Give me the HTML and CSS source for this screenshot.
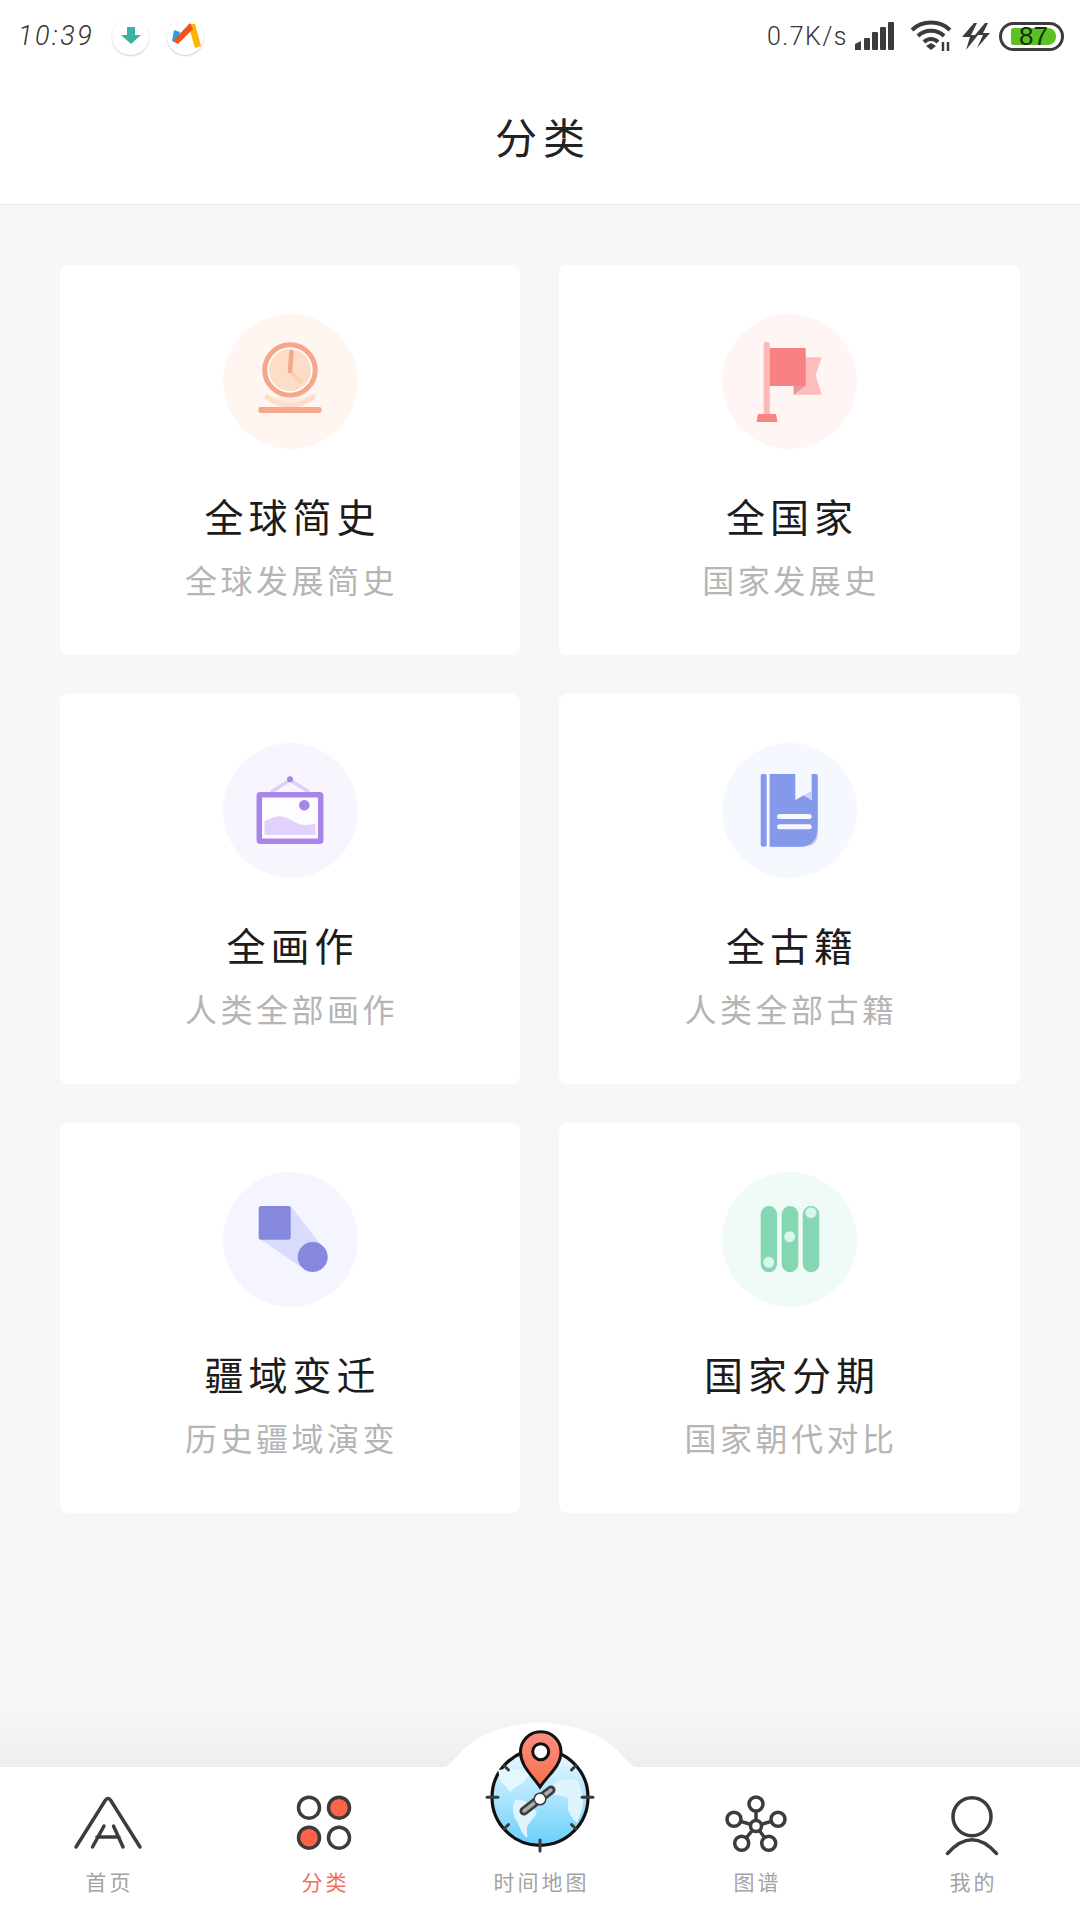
FILE: index.html
```html
<!DOCTYPE html>
<html lang="zh-CN">
<head>
  <meta charset="UTF-8" />
  <meta name="viewport" content="width=device-width, initial-scale=1" />
  <title>分类</title>
  <link rel="stylesheet" href="styles.css">
</head>
<body>

<header class="top">
  <div class="status">
    <div class="status-left">
      <span class="time">10:39</span>
      <span class="note">
        <svg width="24" height="24" viewBox="0 0 24 24"><path d="M8 3h8v8h6l-10 9L2 11h6z" fill="#3cb2a0"/></svg>
      </span>
      <span class="note">
        <svg width="30" height="30" viewBox="0 0 30 30">
          <path d="M3 9l6 2-3 11-5-2z" fill="#2a9fe8"/>
          <path d="M17 3h7l6 22-6 2z" fill="#ffb400"/>
          <path d="M19 2l3 6-15 15-5-3z" fill="#f4511e"/>
        </svg>
      </span>
    </div>
    <div class="status-right">
      <span class="speed">0.7K/s</span>
      <svg width="40" height="30" viewBox="0 0 40 30" fill="#3c3c3c">
        <path d="M0 23l6-3v9H0z"/><rect x="9" y="17" width="6" height="12" rx="1"/><rect x="17" y="11" width="6" height="18" rx="1"/><rect x="25" y="6" width="6" height="23" rx="1"/><rect x="33" y="1" width="6" height="28" rx="1"/>
      </svg>
      <svg class="wifi" width="44" height="32" viewBox="0 0 44 32" fill="none" stroke="#3c3c3c" stroke-width="4">
        <path d="M2 10C12 0 30 0 40 10"/><path d="M8 16C15 9 27 9 34 16"/><path d="M14 22c4-4 10-4 14 0"/>
        <path d="M16 26l5-3 5 3-5 4z" fill="#3c3c3c" stroke="none"/>
        <path d="M33 22v9M38 22v9" stroke-width="2.5"/>
      </svg>
      <svg width="30" height="30" viewBox="0 0 30 30" fill="#3c3c3c">
        <path d="M13 2L1 16h8L5 29l12-15h-7l6-12z"/><path d="M24 2L14 14h8l-6 13 13-15h-7l5-10z"/>
      </svg>
      <div class="battery"><span class="battery-fill">87</span></div>
    </div>
  </div>
  <h1 class="page-title">分类</h1>
</header>

<main class="grid">

  <a class="card">
    <svg class="card-icon" viewBox="0 0 135 135">
      <circle cx="67.5" cy="67.5" r="67.5" fill="#fff6f1"/>
      <circle cx="67" cy="56" r="25.2" fill="#fff" stroke="#f6a78a" stroke-width="5"/>
      <circle cx="67" cy="56" r="21" fill="#fddcc8"/>
      <path d="M67 57l10.500 10.500" stroke="#fcd0b3" stroke-width="4" stroke-linecap="round" fill="none"/>
      <path d="M68.500 38L67 57" stroke="#f6a78a" stroke-width="4.500" stroke-linecap="round" fill="none"/>
      <path d="M44 83Q67 100 90 83" stroke="#fddcc8" stroke-width="5" stroke-linecap="round" fill="#fddcc8" fill-opacity=".45"/>
      <rect x="35.500" y="93" width="63" height="6" rx="2" fill="#f7a88b"/>
    </svg>
    <h2 class="card-title">全球简史</h2>
    <p class="card-sub">全球发展简史</p>
  </a>

  <a class="card">
    <svg class="card-icon" viewBox="0 0 135 135">
      <circle cx="67.5" cy="67.5" r="67.5" fill="#fff5f5"/>
      <path d="M83.700 43.300h16l-6 18 6 19.400h-28V72z" fill="#ffbcbc"/>
      <path d="M71.700 72h12l-12 8.700z" fill="#e59a9a"/>
      <rect x="41.700" y="28" width="6" height="74" rx="2" fill="#ffb8b8"/>
      <path d="M47.700 34h35a1 1 0 0 1 1 1v37h-36z" fill="#f98184"/>
      <path d="M36 100h18l1.500 8H34.500z" fill="#f98484"/>
    </svg>
    <h2 class="card-title">全国家</h2>
    <p class="card-sub">国家发展史</p>
  </a>

  <a class="card">
    <svg class="card-icon" viewBox="0 0 135 135">
      <circle cx="67.5" cy="67.5" r="67.5" fill="#f8f5ff"/>
      <path d="M48 49l19-12 19 12" stroke="#dfd0fb" stroke-width="3.500" fill="none"/>
      <circle cx="67" cy="36.300" r="3" fill="#a985e8"/>
      <rect x="36.300" y="51.800" width="61.400" height="46.400" rx="1" fill="#fdfcff" stroke="#a985e8" stroke-width="5.500"/>
      <path d="M41.500 78c8-3 13-6 20-4s14 9 22 8c4 0 7-1 9-1.500V92h-51z" fill="#e0d2fc"/>
      <circle cx="81.300" cy="62.300" r="5.300" fill="#a985e8"/>
    </svg>
    <h2 class="card-title">全画作</h2>
    <p class="card-sub">人类全部画作</p>
  </a>

  <a class="card">
    <svg class="card-icon" viewBox="0 0 135 135">
      <circle cx="67.5" cy="67.5" r="67.5" fill="#f5f8ff"/>
      <rect x="38.700" y="31" width="6" height="72.700" rx="2" fill="#8499ea"/>
      <path d="M47.700 31h46a2 2 0 0 1 2 2v60q-1 10.700-14 10.700h-34z" fill="#c9d3f7"/>
      <path d="M47.700 31h46a2 2 0 0 1 2 2v53q-1 17.700-18 17.700h-30z" fill="#8499ea"/>
      <path d="M73.300 31h16.300v26l-8-4.700-8.300 4.700z" fill="#f5f8ff"/>
      <path d="M81.600 52.300l8 4.700v-9z" fill="#c9d3f7"/>
      <rect x="55" y="71" width="34.700" height="5" rx="2.500" fill="#f5f8ff"/>
      <rect x="55" y="81.300" width="34.700" height="5" rx="2.500" fill="#f5f8ff"/>
    </svg>
    <h2 class="card-title">全古籍</h2>
    <p class="card-sub">人类全部古籍</p>
  </a>

  <a class="card">
    <svg class="card-icon" viewBox="0 0 135 135">
      <circle cx="67.5" cy="67.5" r="67.5" fill="#f5f5ff"/>
      <path d="M67.700 34l29 37.500L78 95 37 67z" fill="#d9dbfd"/>
      <rect x="35.700" y="34" width="32" height="33.700" rx="2.500" fill="#8588dc"/>
      <circle cx="89.700" cy="85" r="15" fill="#8588dc"/>
    </svg>
    <h2 class="card-title">疆域变迁</h2>
    <p class="card-sub">历史疆域演变</p>
  </a>

  <a class="card">
    <svg class="card-icon" viewBox="0 0 135 135">
      <circle cx="67.5" cy="67.5" r="67.5" fill="#f0fbf8"/>
      <rect x="38.700" y="34" width="16.400" height="66.300" rx="8.200" fill="#85d6b3"/>
      <rect x="59.700" y="34" width="16.600" height="66.300" rx="8.300" fill="#85d6b3"/>
      <rect x="80.700" y="34" width="16.600" height="66.300" rx="8.300" fill="#85d6b3"/>
      <circle cx="46.700" cy="90.300" r="5.500" fill="#d9f6ec"/>
      <circle cx="67.700" cy="64.700" r="5.500" fill="#d9f6ec"/>
      <circle cx="89" cy="40.700" r="5.500" fill="#d9f6ec"/>
    </svg>
    <h2 class="card-title">国家分期</h2>
    <p class="card-sub">国家朝代对比</p>
  </a>

</main>

<nav class="tabbar">
  <svg class="bump" width="194" height="44" viewBox="0 0 194 44"><path d="M0 44C6 44 10 37 17 30C35 11 65 0 97 0C129 0 159 11 177 30C184 37 188 44 194 44Z" fill="#fff"/></svg>

  <a class="tab">
    <svg class="tab-icon" viewBox="0 0 70 62" fill="none" stroke="#3c3c3c" stroke-width="3.500" stroke-linecap="round">
      <path d="M3 53L32.500 6Q35 3 37.500 6L67 53"/>
      <path d="M19.500 53L31 32M40.500 32L50 53M24 43h22"/>
    </svg>
    <span class="tab-label">首页</span>
  </a>

  <a class="tab tab-active">
    <svg class="tab-icon" viewBox="0 0 70 62" stroke="#3c3c3c" stroke-width="3.500">
      <circle cx="20" cy="13.700" r="10.500" fill="#fff"/>
      <circle cx="50" cy="13.700" r="10.500" fill="#ff6347"/>
      <circle cx="20" cy="43.700" r="10.500" fill="#ff6347"/>
      <circle cx="50" cy="43.700" r="10.500" fill="#fff"/>
    </svg>
    <span class="tab-label">分类</span>
  </a>

  <a class="tab">
    <svg class="tab-map" viewBox="0 0 120 131">
      <defs>
        <linearGradient id="sea" x1="0" y1="0" x2="0" y2="1">
          <stop offset="0" stop-color="#f0faff"/>
          <stop offset="1" stop-color="#69cffb"/>
        </linearGradient>
        <linearGradient id="pin" x1="0" y1="0" x2="0" y2="1">
          <stop offset="0" stop-color="#fb9080"/>
          <stop offset="1" stop-color="#f86e4c"/>
        </linearGradient>
      </defs>
      <circle cx="60" cy="72.300" r="48" fill="url(#sea)" stroke="#111" stroke-width="3.200"/>
      <path d="M18 45c10-2 22-1 32 3l-4 6-3 4c-5 2-9 5-13 9-3-3-3-6-8-9-2-4-3-9-4-13z" fill="#e6f7fe"/>
      <path d="M35 75c7-2 16 3 22 13-3 5-7 8-10 14-1 4 1 8 0 11-5-4-7-10-9-15-3-4-5-8-5-13 0-4 0-7 2-10z" fill="#dff4fd"/>
      <path d="M75 57c7-3 15-4 22-2 3 6 6 13 6 20 0 8-3 15-6 23-4-3-7-8-9-13 0-5 1-9-1-13-5-1-11-1-15-4 0-4 1-8 3-11z" fill="#dff4fd"/>
      <g stroke="#3c3c3c" stroke-width="3" stroke-linecap="round">
        <path d="M7 72.300h11M102 72.300h11M60 115v11M24.500 41l4 4M95.500 41l-4 4M24.500 103.500l4-4M95.500 103.500l-4-4"/>
      </g>
      <path d="M44 86L71 65" stroke="#3c3c3c" stroke-width="9" stroke-linecap="round"/>
      <path d="M44 86L71 65" stroke="#a9adb0" stroke-width="3.500" stroke-linecap="round"/>
      <circle cx="60" cy="74" r="5.800" fill="#fff" stroke="#3c3c3c" stroke-width="1.500"/>
      <path d="M60 62C52 50 40.500 41 40.500 27A20 20 0 0 1 81 27C81 41 68 50 60 62Z" fill="url(#pin)" stroke="#111" stroke-width="3"/>
      <circle cx="60.700" cy="26.700" r="8" fill="#fff" stroke="#111" stroke-width="3"/>
    </svg>
    <span class="tab-label">时间地图</span>
  </a>

  <a class="tab">
    <svg class="tab-icon" viewBox="0 0 70 62" fill="#fff" stroke="#3c3c3c" stroke-width="3.500">
      <path d="M35 32V10M35 32L13 25.300M35 32L57 25.300M35 32L20.700 49.300M35 32L47.700 49.300" fill="none"/>
      <circle cx="35" cy="10" r="7"/>
      <circle cx="13" cy="25.300" r="7"/>
      <circle cx="57" cy="25.300" r="7"/>
      <circle cx="20.700" cy="49.300" r="7"/>
      <circle cx="47.700" cy="49.300" r="7"/>
      <circle cx="35" cy="32" r="5.500"/>
    </svg>
    <span class="tab-label">图谱</span>
  </a>

  <a class="tab">
    <svg class="tab-icon" viewBox="0 0 70 62" fill="none" stroke="#3c3c3c" stroke-width="3.500" stroke-linecap="round">
      <circle cx="35" cy="22.700" r="19"/>
      <path d="M10.500 59.500Q35 32 59.500 59.500"/>
    </svg>
    <span class="tab-label">我的</span>
  </a>
</nav>

</body>
</html>
```

FILE: styles.css
```css
* {
  box-sizing: border-box;
}
body {
  margin: 0;
  width: 1080px;
  height: 1920px;
  display: flex;
  flex-direction: column;
  font-family: "Noto Sans CJK SC", "Noto Sans", sans-serif;
  background: #f7f7f8;
  color: #222;
  overflow: hidden;
}

/* status bar + title */
.top {
  background: #fff;
  height: 205px;
  border-bottom: 1px solid #e8e8e8;
}
.status {
  height: 72px;
  padding: 0 16px 0 18px;
  display: flex;
  justify-content: space-between;
  align-items: center;
}
.status-left,
.status-right {
  display: flex;
  align-items: center;
}
.time {
  font-family: Roboto, sans-serif;
  font-weight: 300;
  font-style: italic;
  font-size: 27px;
  letter-spacing: 2.5px;
  color: #333;
  width: 94px;
}
.note {
  width: 37px;
  height: 37px;
  margin-right: 18px;
  border-radius: 50%;
  background: #fff;
  box-shadow: 0 1px 2px rgba(0,0,0,0.2);
  display: flex;
  align-items: center;
  justify-content: center;
}
.note svg {
  flex: none;
}
.speed {
  font-family: Roboto, sans-serif;
  font-weight: 300;
  font-size: 25px;
  letter-spacing: 1.5px;
  color: #333;
  margin-right: 7px;
}
.wifi {
  margin: 0 7px 0 15px;
}
.battery {
  width: 65px;
  height: 29px;
  margin-left: 8px;
  padding: 3px 5px 3px 9px;
  border: 3px solid #3c3c3c;
  border-radius: 15px;
}
.battery-fill {
  display: block;
  height: 17px;
  background: #5ec025;
  border-radius: 2px 8px 8px 2px;
  font-family: "Liberation Sans", sans-serif;
  font-size: 26px;
  line-height: 17px;
  text-align: center;
  color: #12300a;
}
.page-title {
  margin: 0;
  height: 128px;
  line-height: 128px;
  padding-left: 6px;
  text-align: center;
  font-size: 42px;
  font-weight: 400;
  letter-spacing: 6px;
  color: #222;
}

/* cards */
.grid {
  flex: 1;
  padding: 60px 60px 0;
  display: grid;
  grid-template-columns: 460px 461px;
  grid-auto-rows: 390px;
  gap: 39px;
}
.card {
  background: #fff;
  border-radius: 8px;
  padding-top: 49px;
  display: flex;
  flex-direction: column;
  align-items: center;
}
.card-icon {
  width: 135px;
  height: 135px;
}
.card-title {
  margin: 41px 0 0;
  padding-left: 5px;
  font-size: 39px;
  line-height: 50px;
  font-weight: 400;
  letter-spacing: 5px;
  color: #1c1c1c;
}
.card-sub {
  margin: 19px 0 0;
  padding-left: 3px;
  font-size: 32px;
  line-height: 40px;
  letter-spacing: 3.5px;
  color: #b5b5b5;
}

/* bottom tabs */
.tabbar {
  position: relative;
  height: 153px;
  background: #fff;
  display: flex;
}
.tabbar::before {
  content: "";
  position: absolute;
  left: 0;
  right: 0;
  top: -62px;
  height: 62px;
  background: linear-gradient(#f7f7f8, #eeeeef);
}
.bump {
  position: absolute;
  left: 443px;
  top: -44px;
}
.tab {
  position: relative;
  flex: 1;
  padding-top: 27px;
  display: flex;
  flex-direction: column;
  align-items: center;
}
.tab-icon {
  width: 70px;
  height: 62px;
}
.tab-map {
  width: 120px;
  height: 131px;
  margin-top: -69px;
}
.tab-label {
  margin-top: 10px;
  padding-left: 3px;
  font-size: 21px;
  line-height: 30px;
  letter-spacing: 3px;
  color: #a3a3a3;
}
.tab-active .tab-label {
  color: #f0725a;
}
```
